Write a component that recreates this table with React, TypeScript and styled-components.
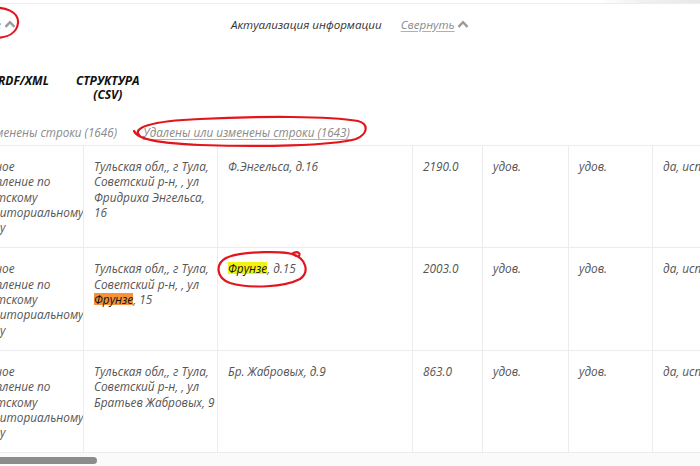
import React from "react";
import styled, { createGlobalStyle } from "styled-components";

const Global = createGlobalStyle`
  html, body { margin: 0; padding: 0; background: #fff; }
  body { font-family: "Open Sans", "DejaVu Sans", sans-serif; overflow: hidden; }
`;

const Viewport = styled.div`
  position: relative;
  width: 700px;
  height: 466px;
  overflow: hidden;
  background: #fff;
`;

const TopEdge = styled.div`
  height: 3px;
  border-bottom: 1px solid #ededed;
  background: linear-gradient(to right, #fff 0, #fff 600px, #f1f1f1 640px, #e8e8e8 100%);
`;

const TopBar = styled.div`
  display: flex;
  align-items: center;
  height: 40px;
  font-style: italic;
  font-size: 11.6px;
  white-space: nowrap;
`;

const ClipLeft = styled.div<{ $w: number }>`
  width: ${(p) => p.$w}px;
  flex: none;
  display: flex;
  justify-content: flex-end;
  align-items: center;
  white-space: nowrap;
`;

const ToggleText = styled.span`
  color: #8a8a8a;
`;

const Title = styled.span`
  margin-left: 215px;
  color: #333;
`;

const CollapseLink = styled.a`
  margin-left: 19px;
  color: #8a8a8a;
  text-decoration: underline;
  text-decoration-color: #b0b0b0;
  text-underline-offset: 2px;
`;

const ChevronSvg = styled.svg<{ $ml: number }>`
  margin-left: ${(p) => p.$ml}px;
  flex: none;
`;

const Chevron = ({ ml }: { ml: number }) => (
  <ChevronSvg $ml={ml} width="12" height="8" viewBox="0 0 12 8">
    <path d="M1.5 6.8 L6 2.2 L10.5 6.8" fill="none" stroke="#9a9a9a" strokeWidth="2.4" />
  </ChevronSvg>
);

const FormatsRow = styled.div`
  display: flex;
  margin-top: 30px;
  height: 28px;
  margin-left: -2px;
  gap: 27px;
`;

const FormatLink = styled.div`
  font-weight: 700;
  font-style: italic;
  font-size: 12px;
  line-height: 14px;
  text-transform: uppercase;
  color: #111;
  text-align: center;
`;

const TabsRow = styled.div`
  display: flex;
  align-items: center;
  margin-top: 22px;
  height: 16px;
  font-style: italic;
  font-size: 11.7px;
  gap: 26px;
`;

const Tab = styled.span<{ $active?: boolean }>`
  color: #8a8a8a;
  white-space: nowrap;
  text-decoration: ${(p) => (p.$active ? "underline" : "none")};
  text-decoration-color: #b0b0b0;
  text-underline-offset: 2px;
`;

const Table = styled.table`
  margin-top: 5px;
  margin-left: -41px;
  border-collapse: collapse;
  table-layout: fixed;
  width: 833px;
`;

const Cell = styled.td`
  border: 1px solid #ececec;
  padding: 13px 6px 12px 10px;
  vertical-align: top;
  font-style: italic;
  font-size: 11.8px;
  line-height: 15.3px;
  color: #555;
  white-space: pre;
  overflow: hidden;
`;

const Mark = styled.span<{ $color: string }>`
  color: #111;
  background: linear-gradient(
    transparent 2.5px,
    ${(p) => p.$color} 2.5px,
    ${(p) => p.$color} 14px,
    transparent 14px
  );
`;

const Track = styled.div`
  height: 14px;
  border-bottom: 1px solid #e4e4e4;
  background: #fafafa;
  display: flex;
  align-items: center;
`;

const Thumb = styled.div`
  margin-left: -20px;
  width: 117px;
  height: 7px;
  border-radius: 4px;
  background: #8c8c8c;
`;

const Overlay = styled.svg`
  position: absolute;
  left: 0;
  top: 0;
  pointer-events: none;
`;

const widths = [124, 134, 195, 70, 86, 84, 140];
const org = "Главное\nуправление по\nСоветскому\nтерриториальному\nокругу";

type Row = { addr: React.ReactNode; street: React.ReactNode; area: string };

const rows: Row[] = [
  {
    addr: "Тульская обл,, г Тула,\nСоветский р-н, , ул\nФридриха Энгельса,\n16",
    street: "Ф.Энгельса, д.16",
    area: "2190.0",
  },
  {
    addr: (
      <>
        {"Тульская обл,, г Тула,\nСоветский р-н, , ул\n"}
        <Mark $color="#f5923a">Фрунзе</Mark>
        {", 15"}
      </>
    ),
    street: (
      <>
        <Mark $color="#f3f312">Фрунзе</Mark>
        {", д.15"}
      </>
    ),
    area: "2003.0",
  },
  {
    addr: "Тульская обл,, г Тула,\nСоветский р-н, , ул\nБратьев Жабровых, 9",
    street: "Бр. Жабровых, д.9",
    area: "863.0",
  },
];

export default function App() {
  return (
    <Viewport>
      <Global />
      <TopEdge />
      <TopBar>
        <ClipLeft $w={16}>
          <ToggleText>Подробнее</ToggleText>
          <Chevron ml={3} />
        </ClipLeft>
        <Title>Актуализация информации</Title>
        <CollapseLink>Свернуть</CollapseLink>
        <Chevron ml={2} />
      </TopBar>
      <FormatsRow>
        <FormatLink>RDF/XML</FormatLink>
        <FormatLink>
          Структура
          <br />
          (CSV)
        </FormatLink>
      </FormatsRow>
      <TabsRow>
        <ClipLeft $w={117}>
          <Tab>Добавлены или изменены строки (1646)</Tab>
        </ClipLeft>
        <Tab $active>Удалены или изменены строки (1643)</Tab>
      </TabsRow>
      <Table>
        <colgroup>
          {widths.map((w, i) => (
            <col key={i} style={{ width: w }} />
          ))}
        </colgroup>
        <tbody>
          {rows.map((r, i) => (
            <tr key={i}>
              <Cell>{org}</Cell>
              <Cell>{r.addr}</Cell>
              <Cell>{r.street}</Cell>
              <Cell>{r.area}</Cell>
              <Cell>удов.</Cell>
              <Cell>удов.</Cell>
              <Cell>да, исправно</Cell>
            </tr>
          ))}
        </tbody>
      </Table>
      <Track>
        <Thumb />
      </Track>
      <Overlay width="700" height="466" viewBox="0 0 700 466">
        <g fill="none" stroke="#e3141c" strokeWidth="2.2" strokeLinecap="round" strokeLinejoin="round">
          <path d="M-10 8 C5 6, 19 12, 18 23 C17 32, 9 38, -6 38" />
          <path d="M140 136 C131 128, 150 121, 200 119 C260 116, 330 116, 358 121 C369 124, 368 134, 356 139 C330 146, 260 147, 200 145 C160 143, 138 140, 134 131" />
          <path d="M296 256 C290 250, 240 251, 226 258 C215 264, 216 278, 230 283 C250 289, 285 287, 300 279 C310 272, 306 258, 292 254 C296 251, 301 252, 299 256" />
        </g>
      </Overlay>
    </Viewport>
  );
}
